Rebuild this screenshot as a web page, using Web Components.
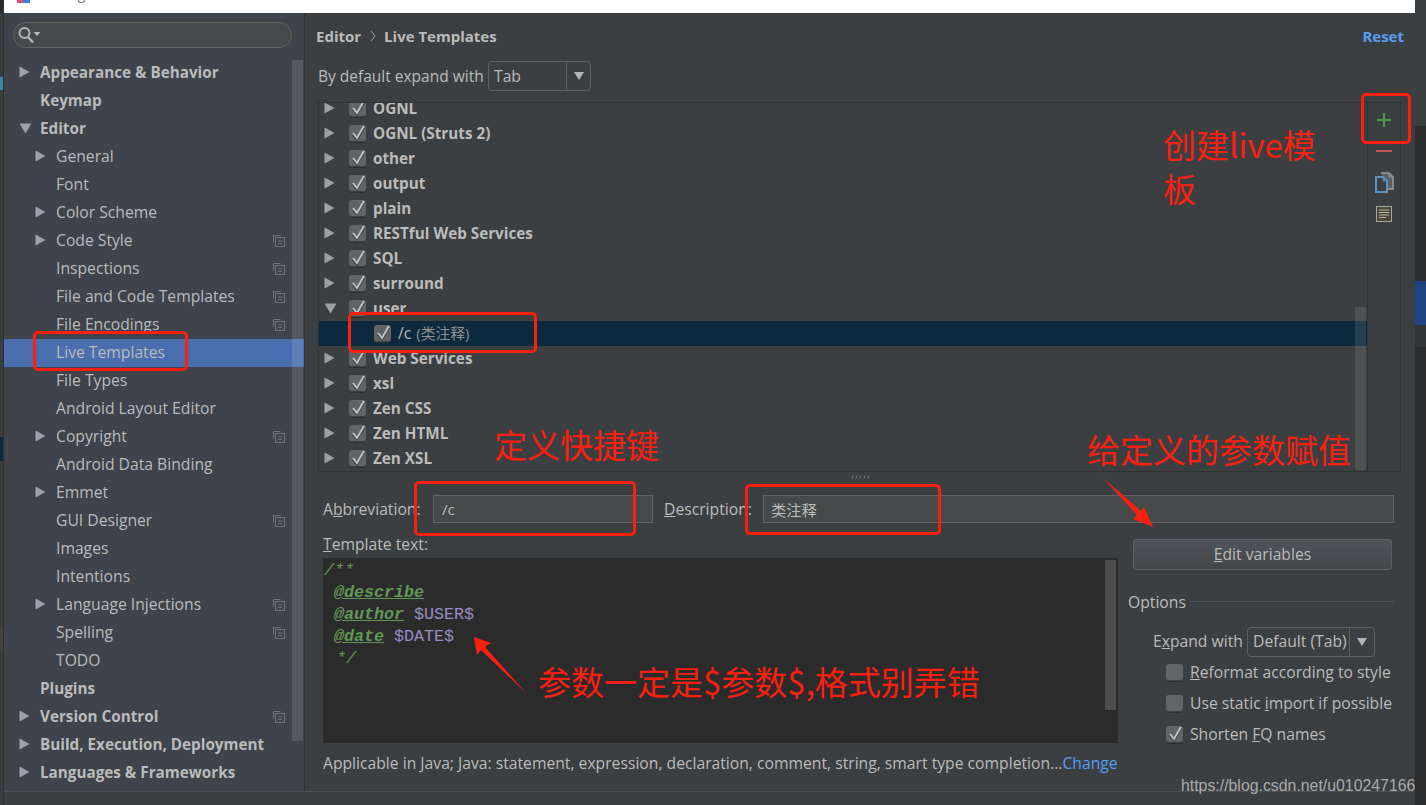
<!DOCTYPE html>
<html lang="en">
<head>
<meta charset="utf-8">
<title>Settings - Live Templates</title>
<style>
  html, body { margin: 0; height: 805px; overflow: hidden; background: #2b2b2b; }
  body { font: 15.7px "Open Sans", "Noto Sans CJK SC", sans-serif; color: #bbbbbb; position: relative; }
  u { text-underline-offset: 2px; }
</style>
</head>
<body>
<settings-window>
  <settings-sidebar slot="side">
    <nav-row arrow="right" strong>Appearance &amp; Behavior</nav-row>
    <nav-row strong>Keymap</nav-row>
    <nav-row arrow="down" strong>Editor</nav-row>
    <nav-row level="1" arrow="right">General</nav-row>
    <nav-row level="1">Font</nav-row>
    <nav-row level="1" arrow="right">Color Scheme</nav-row>
    <nav-row level="1" arrow="right" shared>Code Style</nav-row>
    <nav-row level="1" shared>Inspections</nav-row>
    <nav-row level="1" shared>File and Code Templates</nav-row>
    <nav-row level="1" shared>File Encodings</nav-row>
    <nav-row level="1" selected>Live Templates</nav-row>
    <nav-row level="1">File Types</nav-row>
    <nav-row level="1">Android Layout Editor</nav-row>
    <nav-row level="1" arrow="right" shared>Copyright</nav-row>
    <nav-row level="1">Android Data Binding</nav-row>
    <nav-row level="1" arrow="right">Emmet</nav-row>
    <nav-row level="1" shared>GUI Designer</nav-row>
    <nav-row level="1">Images</nav-row>
    <nav-row level="1">Intentions</nav-row>
    <nav-row level="1" arrow="right" shared>Language Injections</nav-row>
    <nav-row level="1" shared>Spelling</nav-row>
    <nav-row level="1">TODO</nav-row>
    <nav-row strong>Plugins</nav-row>
    <nav-row arrow="right" strong shared>Version Control</nav-row>
    <nav-row arrow="right" strong>Build, Execution, Deployment</nav-row>
    <nav-row arrow="right" strong>Languages &amp; Frameworks</nav-row>
  </settings-sidebar>

  <live-templates slot="main">
    <template-tree slot="tree">
      <tpl-row>OGNL</tpl-row>
      <tpl-row>OGNL (Struts 2)</tpl-row>
      <tpl-row>other</tpl-row>
      <tpl-row>output</tpl-row>
      <tpl-row>plain</tpl-row>
      <tpl-row>RESTful Web Services</tpl-row>
      <tpl-row>SQL</tpl-row>
      <tpl-row>surround</tpl-row>
      <tpl-row open>user</tpl-row>
      <tpl-row child selected>/c <span style="color:#8c9094;margin-left:1px;font-size:14.8px">(类注释)</span></tpl-row>
      <tpl-row>Web Services</tpl-row>
      <tpl-row>xsl</tpl-row>
      <tpl-row>Zen CSS</tpl-row>
      <tpl-row>Zen HTML</tpl-row>
      <tpl-row>Zen XSL</tpl-row>
    </template-tree>
    <code-pane slot="code"></code-pane>
  </live-templates>
</settings-window>
<note-layer></note-layer>

<script>
const TRI_RIGHT = '<svg width="11" height="12" viewBox="0 0 11 12"><path d="M0.5 0.5 L10.5 6 L0.5 11.5Z" fill="#9fa2a5"/></svg>';
const TRI_DOWN = '<svg width="13" height="11" viewBox="0 0 13 11"><path d="M0.5 0.5 H12.5 L6.5 10.5Z" fill="#9fa2a5"/></svg>';

class SettingsWindow extends HTMLElement {
  constructor() {
    super();
    this.attachShadow({ mode: 'open' });
    this.shadowRoot.innerHTML = `
      <style>
        :host { display: flex; width: 1426px; height: 805px; overflow: hidden; }
        .left { width: 3px; border-right: 1px solid #2d2f30; background: #3a3d3f; display: flex; flex-direction: column; }
        .left i { display: block; flex: none; }
        .win { width: 1411px; display: flex; flex-direction: column; background: #3c3f41; }
        .title { height: 13px; background: #fff; display: flex; align-items: flex-end; overflow: hidden; flex: none; }
        .logo { width: 13px; height: 3px; margin: 0 10px 10px 13px; background: linear-gradient(90deg, #e8476f 0 45%, #3b82d6 45%); }
        .name { font: 14px "Open Sans", sans-serif; color: #777; line-height: 20px; margin-bottom: 9px; }
        .body { height: 778px; display: flex; flex: none; }
        .foot { flex: 1; border-top: 1px solid #4d5052; }
        .right { width: 11px; display: flex; flex-direction: column; background: #2b2b2b; }
        .right i { display: block; flex: none; }
      </style>
      <div class="left">
        <i style="height:13px;background:#2b2b2b"></i>
        <i style="height:64px"></i>
        <i style="height:13px;background:#3a86a8"></i>
        <i style="height:347px"></i>
        <i style="height:24px;background:#0d293e"></i>
        <i style="height:167px"></i>
        <i style="height:23px;background:#45423a"></i>
      </div>
      <div class="win">
        <div class="title"><span class="logo"></span><span class="name">Settings</span></div>
        <div class="body"><slot name="side"></slot><slot name="main"></slot></div>
        <div class="foot"></div>
      </div>
      <div class="right">
        <i style="height:126px;background:#3c3f41;border-top:0"></i>
        <i style="height:155px"></i>
        <i style="height:44px;background:#214283"></i>
        <i style="height:22px;background:#313335"></i>
      </div>`;
  }
}

class SettingsSidebar extends HTMLElement {
  constructor() {
    super();
    this.attachShadow({ mode: 'open' });
    this.shadowRoot.innerHTML = `
      <style>
        :host { display: block; position: relative; width: 300px; height: 778px; background: #3e434c; border-right: 1px solid #323232; box-sizing: content-box; }
        .search { margin: 9px 0 11px 9px; width: 273px; height: 24px; border: 1px solid #646464; border-radius: 13px; background: #45494a; display: flex; align-items: center; padding-left: 4px; }
        .bar { position: absolute; left: 288px; top: 47px; width: 11px; height: 681px; background: rgba(255,255,255,.12); }
      </style>
      <div class="search">
        <svg width="24" height="20" viewBox="0 0 24 20" fill="none">
          <circle cx="6.5" cy="8" r="5" stroke="#b4b6b8" stroke-width="2"/>
          <path d="M10 12 L15 17.5" stroke="#b4b6b8" stroke-width="2.4"/>
          <path d="M15.5 7 H22.5 L19 11Z" fill="#b4b6b8"/>
        </svg>
      </div>
      <slot></slot>
      <div class="bar"></div>`;
  }
}

class NavRow extends HTMLElement {
  constructor() {
    super();
    this.attachShadow({ mode: 'open' });
  }
  connectedCallback() {
    const level = +(this.getAttribute('level') || 0);
    const arrow = this.getAttribute('arrow');
    const icon = arrow === 'down' ? TRI_DOWN : arrow === 'right' ? TRI_RIGHT : '';
    this.shadowRoot.innerHTML = `
      <style>
        :host { display: flex; align-items: center; height: 28px; box-sizing: border-box; padding-bottom: 2px; color: #bbbbbb; }
        :host([strong]) { font-weight: 700; font-size: 15.25px; }
        :host([selected]) { background: #4b6eaf; }
        .arrow { width: 36px; flex: none; box-sizing: border-box; padding-left: 15px; display: flex; align-items: center; }
        .arrow svg { display: block; }
        .text { white-space: nowrap; flex: 1; }
        .shared { margin-right: 19px; display: block; }
      </style>
      <span class="arrow" style="margin-left:${level * 16}px">${icon}</span>
      <span class="text"><slot></slot></span>
      ${this.hasAttribute('shared') ? `<svg class="shared" width="13" height="13" viewBox="0 0 13 13" fill="none" stroke="#6f7275">
        <path d="M8.5 1.5 H1.5 V8.5"/><rect x="3.5" y="3.5" width="9" height="9"/><path d="M6 7 H10 M6 9.5 H10"/></svg>` : ''}`;
  }
}

class LiveTemplates extends HTMLElement {
  constructor() {
    super();
    this.attachShadow({ mode: 'open' });
    this.shadowRoot.innerHTML = `
      <style>
        :host { display: flex; flex-direction: column; width: 1110px; height: 778px; box-sizing: border-box; padding-top: 13px; }
        .crumb { height: 20px; display: flex; align-items: center; padding: 0 11px; font-weight: 700; font-size: 15px; line-height: 20px; }
        .crumb .sep { width: 23px; display: flex; justify-content: center; }
        .reset { margin-left: auto; color: #589df6; }
        .expand { height: 30px; margin: 15px 0 11px 13px; display: flex; align-items: center; }
        .expand .lbl { width: 170px; font-size: 15.5px; }
        .panel { margin-left: 13px; width: 1083px; height: 370px; box-sizing: border-box; border: 1px solid #323232; display: flex; }
        .tools { width: 32px; flex: none; border-left: 1px solid #323232; padding-top: 1px; }
        .tools div { height: 31.5px; display: flex; align-items: center; justify-content: center; }
        .split { height: 23px; display: flex; justify-content: center; padding-top: 2px; box-sizing: border-box; padding-right: 1px; }
        .form { display: flex; height: 28px; align-items: center; margin-left: 18px; }
        .form .a { width: 110px; }
        .form .d { width: 99px; margin-left: 11px; }
        .lower { display: flex; }
        .lcol { width: 795px; margin-left: 18px; }
        .lcol .t { height: 20px; line-height: 20px; margin-top: 11px; margin-bottom: 4px; }
        .app { margin-top: 10px; height: 20px; line-height: 20px; white-space: nowrap; }
        .app a { color: #589df6; }
        .rcol { width: 266px; margin-left: 10px; padding-top: 16px; }
        .btn { margin-left: 5px; width: 259px; height: 31px; box-sizing: border-box; border: 1px solid #5e6060; border-radius: 3px; background: linear-gradient(#50545a, #44474a); display: flex; align-items: center; justify-content: center; padding-bottom: 2px; }
        .opt { display: flex; align-items: center; gap: 3px; height: 20px; margin-top: 22px; }
        .opt hr { flex: 1; border: 0; border-top: 1px solid #4d5052; margin: 0; position: relative; top: -1px; }
        .ex { display: flex; align-items: center; height: 29px; margin: 15px 0 1px 25px; }
        .ex .lbl { width: 94px; padding-bottom: 2px; }
      </style>
      <div class="crumb">
        <span>Editor</span>
        <span class="sep"><svg width="6" height="12" viewBox="0 0 6 12" fill="none"><path d="M1 1 L5 6 L1 11" stroke="#9fa2a5"/></svg></span>
        <span>Live Templates</span>
        <span class="reset">Reset</span>
      </div>
      <div class="expand"><span class="lbl">By default expand with</span><combo-box style="width:103px" tail="24">Tab</combo-box></div>
      <div class="panel">
        <slot name="tree"></slot>
        <div class="tools">
          <div><svg width="16" height="16" viewBox="0 0 16 16"><path d="M8 1 V15 M1 8 H15" stroke="#3ea33e" stroke-width="2"/></svg></div>
          <div><svg width="16" height="4" viewBox="0 0 16 4"><path d="M0 2 H16" stroke="#c75450" stroke-width="2"/></svg></div>
          <div><svg width="19" height="21" viewBox="0 0 19 21" fill="none">
            <path d="M6 1 H14 L18 5 V17 H13" stroke="#9b9d9f" stroke-width="1.5" fill="#5c5e60"/>
            <path d="M14 1 V5 H18" stroke="#9b9d9f"/>
            <path d="M1 5 H8 L12 9 V20 H1Z" stroke="#5a93c4" stroke-width="2" fill="#3c3f41"/>
            <path d="M8 5 V9 H12" stroke="#5a93c4"/></svg></div>
          <div><svg width="16" height="16" viewBox="0 0 16 16"><rect x=".5" y=".5" width="15" height="15" fill="#4c4836" stroke="#a3a5a6"/><path d="M3 4 H13 M3 6.5 H13 M3 9 H13 M3 11.5 H10" stroke="#b3b09e"/></svg></div>
        </div>
      </div>
      <div class="split"><svg width="20" height="6" viewBox="0 0 20 6"><path d="M2 4.5 L3 1 M6 4.5 L7 1 M10 4.5 L11 1 M14 4.5 L15 1 M18 4.5 L19 1" stroke="#a5a7a9" stroke-dasharray="1 1"/></svg></div>
      <div class="form">
        <span class="a">A<u>b</u>breviation:</span>
        <text-field style="width:220px;--pad:8px">/c</text-field>
        <span class="d"><u>D</u>escription:</span>
        <text-field style="width:631px;--pad:7px">类注释</text-field>
      </div>
      <div class="lower">
        <div class="lcol">
          <div class="t"><u>T</u>emplate text:</div>
          <slot name="code"></slot>
          <div class="app">Applicable in Java; Java: statement, expression, declaration, comment, string, smart type completion...<a>Change</a></div>
        </div>
        <div class="rcol">
          <div class="btn"><span><u>E</u>dit variables</span></div>
          <div class="opt"><span>Options</span><hr></div>
          <div class="ex"><span class="lbl">E<u>x</u>pand with</span><combo-box style="width:128px" tail="25">Default (Tab)</combo-box></div>
          <check-row><u>R</u>eformat according to style</check-row>
          <check-row>Use static <u>i</u>mport if possible</check-row>
          <check-row checked>Shorten <u>F</u>Q names</check-row>
        </div>
      </div>`;
  }
}

class TemplateTree extends HTMLElement {
  constructor() {
    super();
    this.attachShadow({ mode: 'open' });
    this.shadowRoot.innerHTML = `
      <style>
        :host { display: block; position: relative; width: 1048px; height: 368px; overflow: hidden; }
        .rows { margin-top: -7px; }
        .bar { position: absolute; right: 1px; top: 204px; bottom: 1px; width: 11px; background: rgba(255,255,255,.1); }
      </style>
      <div class="rows"><slot></slot></div>
      <div class="bar"></div>`;
  }
}

class TplRow extends HTMLElement {
  constructor() {
    super();
    this.attachShadow({ mode: 'open' });
  }
  connectedCallback() {
    const child = this.hasAttribute('child');
    this.shadowRoot.innerHTML = `
      <style>
        :host { display: flex; align-items: center; height: 25px; font-weight: 700; font-size: 15.25px; color: #bbbbbb; box-sizing: border-box; padding-left: 5px; white-space: nowrap; }
        :host([child]) { font-weight: 400; font-size: 15.7px; padding-left: 55px; }
        :host([selected]) { background: #0d293e; }
        .arrow { width: 25px; flex: none; display: flex; align-items: center; padding-bottom: 1px; }
        tick-box { margin-right: 7px; }
        .t { padding-bottom: 2px; }
      </style>
      ${child ? '' : `<span class="arrow">${this.hasAttribute('open') ? TRI_DOWN : TRI_RIGHT}</span>`}
      <tick-box checked></tick-box>
      <span class="t"><slot></slot></span>`;
  }
}

class TickBox extends HTMLElement {
  constructor() {
    super();
    this.attachShadow({ mode: 'open' });
  }
  connectedCallback() {
    this.shadowRoot.innerHTML = `
      <style>
        :host { display: block; position: relative; width: 17px; height: 17px; flex: none; background: #626466; border-radius: 3px; box-shadow: inset 0 -1px 0 #3f4041, 0 1px 0 #2e2f30; }
        svg { position: absolute; left: 1px; top: -1px; overflow: visible; }
      </style>
      ${this.hasAttribute('checked') ? `<svg width="16" height="18" viewBox="0 0 16 18" fill="none">
        <path d="M3 9 L7 14 L14 2" stroke="#2f3031" stroke-width="2" transform="translate(0 1.3)"/>
        <path d="M3 9 L7 14 L14 2" stroke="#c0c1c2" stroke-width="2"/></svg>` : ''}`;
  }
}

class CheckRow extends HTMLElement {
  constructor() {
    super();
    this.attachShadow({ mode: 'open' });
  }
  connectedCallback() {
    this.shadowRoot.innerHTML = `
      <style>
        :host { display: flex; align-items: center; gap: 7px; height: 31px; margin-left: 38px; white-space: nowrap; }
        .t { padding-bottom: 2px; }
      </style>
      <tick-box ${this.hasAttribute('checked') ? 'checked' : ''}></tick-box>
      <span class="t"><slot></slot></span>`;
  }
}

class ComboBox extends HTMLElement {
  constructor() {
    super();
    this.attachShadow({ mode: 'open' });
  }
  connectedCallback() {
    const tail = this.getAttribute('tail') || 24;
    this.shadowRoot.innerHTML = `
      <style>
        :host { display: flex; height: 30px; box-sizing: border-box; border: 1px solid #5e6060; border-radius: 4px; align-items: center; }
        .v { flex: 1; padding: 0 0 1px 5px; white-space: nowrap; }
        .t { width: ${tail}px; height: 100%; box-sizing: border-box; border-left: 1px solid #5e6060; display: flex; align-items: center; justify-content: center; }
      </style>
      <span class="v"><slot></slot></span>
      <span class="t"><svg width="10" height="8" viewBox="0 0 10 8"><path d="M0 0 H10 L5 8Z" fill="#b4b6b8"/></svg></span>`;
  }
}

class TextField extends HTMLElement {
  constructor() {
    super();
    this.attachShadow({ mode: 'open' });
    this.shadowRoot.innerHTML = `
      <style>
        :host { display: flex; align-items: center; height: 28px; box-sizing: border-box; border: 1px solid #646464; background: #45494a; padding-left: var(--pad, 8px); }
        span { padding-bottom: 1px; font-size: 15.3px; }
      </style>
      <span><slot></slot></span>`;
  }
}

class CodePane extends HTMLElement {
  constructor() {
    super();
    this.attachShadow({ mode: 'open' });
    this.shadowRoot.innerHTML = `
      <style>
        :host { display: block; position: relative; width: 795px; height: 185px; background: #2b2b2b; font: 16.67px/22px "Liberation Mono", monospace; color: #629755; font-style: italic; box-sizing: border-box; padding: 2px 0 0 1px; }
        div { white-space: pre; }
        b { text-decoration: underline; }
        .v { color: #9a8bc2; font-style: normal; }
        .end { padding-left: 2px; }
        .bar { position: absolute; left: 782px; top: 2px; width: 11px; height: 150px; background: #4d4d4d; }
      </style>
      <div>/**</div>
      <div> <b>@describe</b></div>
      <div> <b>@author</b> <span class="v">$USER$</span></div>
      <div> <b>@date</b> <span class="v">$DATE$</span></div>
      <div class="end"> */</div>
      <div class="bar"></div>`;
  }
}

// the red marks somebody drew on top of the screenshot
class NoteLayer extends HTMLElement {
  constructor() {
    super();
    this.attachShadow({ mode: 'open' });
    const boxes = [[33,331,155,40],[348,312,189,41],[1361,93,50,51],[414,481,222,55],[745,484,196,51]];
    const notes = [
      ['创建live模板', 1163, 122, 160],
      ['定义快捷键', 494, 422, 200],
      ['给定义的参数赋值', 1087, 427, 300],
      ['参数一定是$参数$,格式别弄错', 538, 659, 480]
    ];
    this.shadowRoot.innerHTML = `
      <style>
        :host { position: absolute; left: 0; top: 0; width: 1426px; height: 805px; pointer-events: none; }
        .box { position: absolute; box-sizing: border-box; border: 3px solid #fb1f10; border-radius: 5px; }
        .note { position: absolute; font: 33px/44px "Noto Sans CJK SC", "Open Sans", sans-serif; color: #fb1f10; }
        .mark { position: absolute; font: 15.85px/20px "Liberation Sans", sans-serif; color: #a9abac; left: 1181px; top: 776px; white-space: nowrap; }
        svg { position: absolute; left: 0; top: 0; }
      </style>
      ${boxes.map(b => `<div class="box" style="left:${b[0]}px;top:${b[1]}px;width:${b[2]}px;height:${b[3]}px"></div>`).join('')}
      ${notes.map(n => `<div class="note" style="left:${n[1]}px;top:${n[2]}px;width:${n[3]}px">${n[0]}</div>`).join('')}
      <svg width="1426" height="805">
        <path d="M1102 477 L1141 511 L1144 507 L1153 527 L1133 519 L1137 515Z" fill="#fb1f10"/>
        <path d="M526 693 L481 650 L477 655 L474 637 L491 643 L485 647Z" fill="#fb1f10"/>
      </svg>
      <div class="mark">https://blog.csdn.net/u010247166</div>`;
  }
}

customElements.define('settings-window', SettingsWindow);
customElements.define('settings-sidebar', SettingsSidebar);
customElements.define('nav-row', NavRow);
customElements.define('live-templates', LiveTemplates);
customElements.define('template-tree', TemplateTree);
customElements.define('tick-box', TickBox);
customElements.define('tpl-row', TplRow);
customElements.define('check-row', CheckRow);
customElements.define('combo-box', ComboBox);
customElements.define('text-field', TextField);
customElements.define('code-pane', CodePane);
customElements.define('note-layer', NoteLayer);
</script>
</body>
</html>
